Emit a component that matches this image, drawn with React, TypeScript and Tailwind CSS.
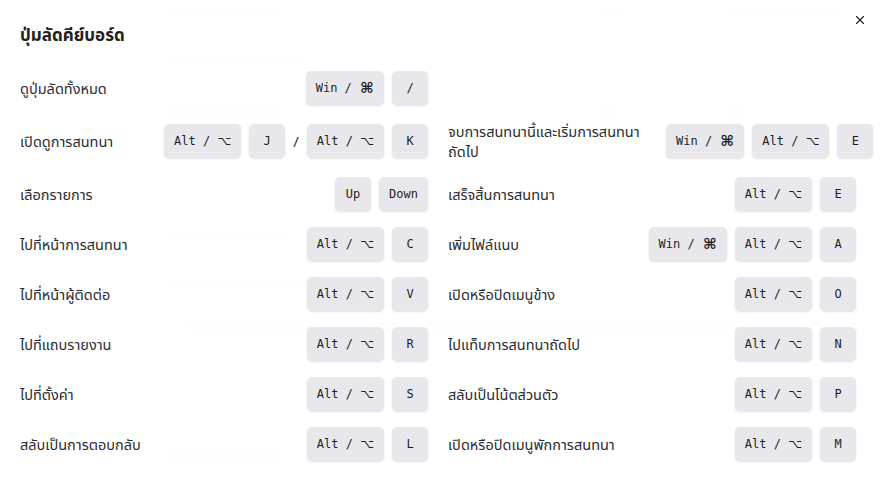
import { X } from "lucide-react";

type Shortcut = {
  label: string;
  keys: string[][];
  wide?: boolean;
};

const rows: (Shortcut | null)[] = [
  { label: "ดูปุ่มลัดทั้งหมด", keys: [["Win / ⌘", "/"]] },
  null,
  { label: "เปิดดูการสนทนา", keys: [["Alt / ⌥", "J"], ["Alt / ⌥", "K"]] },
  { label: "จบการสนทนานี้และเริ่มการสนทนาถัดไป", keys: [["Win / ⌘", "Alt / ⌥", "E"]], wide: true },
  { label: "เลือกรายการ", keys: [["Up", "Down"]] },
  { label: "เสร็จสิ้นการสนทนา", keys: [["Alt / ⌥", "E"]] },
  { label: "ไปที่หน้าการสนทนา", keys: [["Alt / ⌥", "C"]] },
  { label: "เพิ่มไฟล์แนบ", keys: [["Win / ⌘", "Alt / ⌥", "A"]] },
  { label: "ไปที่หน้าผู้ติดต่อ", keys: [["Alt / ⌥", "V"]] },
  { label: "เปิดหรือปิดเมนูข้าง", keys: [["Alt / ⌥", "O"]] },
  { label: "ไปที่แถบรายงาน", keys: [["Alt / ⌥", "R"]] },
  { label: "ไปแท็บการสนทนาถัดไป", keys: [["Alt / ⌥", "N"]] },
  { label: "ไปที่ตั้งค่า", keys: [["Alt / ⌥", "S"]] },
  { label: "สลับเป็นโน้ตส่วนตัว", keys: [["Alt / ⌥", "P"]] },
  { label: "สลับเป็นการตอบกลับ", keys: [["Alt / ⌥", "L"]] },
  { label: "เปิดหรือปิดเมนูพักการสนทนา", keys: [["Alt / ⌥", "M"]] },
];

const Key = ({ children }: { children: string }) => {
  const last = children.slice(-1);
  return (
    <kbd className="flex h-[34px] min-w-[36px] items-center justify-center whitespace-pre rounded-[5px] bg-[#e8e8ec] px-[10px] font-['DejaVu_Sans_Mono',monospace] text-[12px] font-normal text-[#1f1f22] shadow-[0_1px_2px_rgba(0,0,0,0.12)]">
      {last === "⌘" ? (
        <>
          {children.slice(0, -1)}
          <span className="ml-[1px] font-['DejaVu_Sans',sans-serif] text-[15px] font-bold leading-none">⌘</span>
        </>
      ) : last === "⌥" ? (
        <>
          {children.slice(0, -1)}
          <span className="font-['DejaVu_Sans',sans-serif] text-[12px] leading-none">⌥</span>
        </>
      ) : (
        children
      )}
    </kbd>
  );
};

const Row = ({ item }: { item: Shortcut }) => (
  <div className="flex items-center justify-between gap-4">
    <span
      className={
        item.wide
          ? "w-[202px] shrink-0 text-[14.5px] leading-5 text-[#2b2b2f]"
          : "text-[14.5px] leading-5 text-[#2b2b2f]"
      }
    >
      {item.label}
    </span>
    <div className="flex shrink-0 items-center gap-2">
      {item.keys.map((group, gi) => (
        <div key={gi} className="flex items-center gap-2">
          {gi > 0 && <span className="text-[15px] text-[#333]">/</span>}
          {group.map((k) => (
            <Key key={k}>{k}</Key>
          ))}
        </div>
      ))}
    </div>
  </div>
);

export default function App() {
  return (
    <div className="relative h-[488px] w-[882px] overflow-hidden bg-white font-['Noto_Sans','Noto_Sans_Thai',sans-serif]">
      {/* page behind the dialog */}
      <div className="flex flex-col gap-9 pl-[165px] pt-[4px] blur-[3px]">
        <div className="flex items-center">
          <div className="h-3 w-[120px] rounded bg-gray-200" />
          <div className="ml-[313px] h-3 w-[34px] rounded bg-gray-200" />
          <div className="ml-[89px] h-3 w-[124px] rounded bg-gray-200" />
        </div>
        <div className="h-3 w-[147px] rounded bg-gray-200" />
        <div className="flex items-center">
          <div className="h-3 w-[120px] rounded bg-gray-200" />
          <div className="ml-[311px] h-6 w-6 rounded-full bg-indigo-100" />
          <div className="ml-[101px] h-6 w-6 rounded-full bg-indigo-100" />
        </div>
        <div className="mt-[70px] h-3 w-[130px] rounded bg-gray-200" />
        <div className="h-3 w-[165px] rounded bg-gray-200" />
        <div className="-mt-2 ml-[20px] h-4 w-[675px] rounded bg-gray-200" />
        <div className="mt-[80px] h-3 w-[125px] rounded bg-gray-200" />
        <div className="mt-4 h-3 w-[245px] rounded bg-gray-200" />
      </div>

      {/* dialog */}
      <div className="absolute inset-0 bg-white/95 px-5 pt-[23px]">
        <button className="absolute right-[11px] top-[9px] p-1 text-[#222]">
          <X size={14} strokeWidth={2} />
        </button>
        <h2 className="text-[17px] font-bold leading-6 text-[#222]">ปุ่มลัดคีย์บอร์ด</h2>
        <div className="mt-[24px] grid grid-cols-[408px_408px] items-center gap-x-5 gap-y-4">
          {rows.map((item, i) => (item ? <Row key={i} item={item} /> : <div key={i} />))}
        </div>
      </div>
    </div>
  );
}
